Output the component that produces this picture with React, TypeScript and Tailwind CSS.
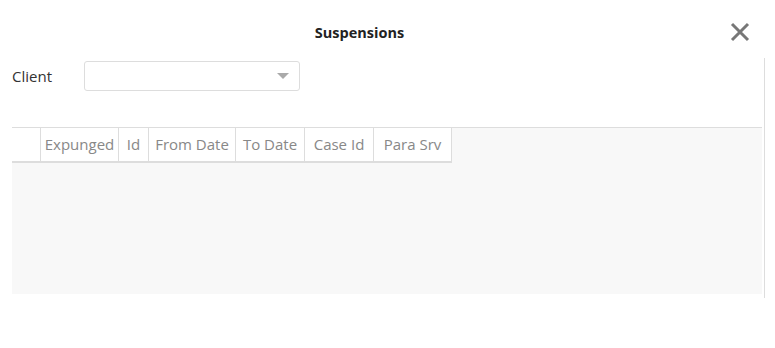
export default function App() {
  const cols = [
    { label: "Expunged", w: "w-[78px]" },
    { label: "Id", w: "w-[30px]" },
    { label: "From Date", w: "w-[87px]" },
    { label: "To Date", w: "w-[69px]" },
    { label: "Case Id", w: "w-[69px]" },
    { label: "Para Srv", w: "w-[78px]" },
  ];
  return (
    <div className="w-[775px] h-[348px] bg-white font-['Open_Sans',sans-serif] text-[#333]">
      {/* header */}
      <div className="relative h-[55px] flex items-center justify-center pt-[10px] pr-[56px]">
        <h1 className="text-[14.5px] font-bold text-[#222]">Suspensions</h1>
        <button className="absolute right-[24px] top-[21px] w-[22px] h-[22px] flex items-center justify-center">
          <svg width="20" height="20" viewBox="0 0 20 20">
            <path d="M2 2 L18 18 M18 2 L2 18" stroke="#777" strokeWidth="3" />
          </svg>
        </button>
      </div>
      <div className="mr-[10px] border-r border-[#ddd] h-[240px]">
        <div className="flex items-center h-[36px] pl-[12px] mt-[3px]">
          <span className="w-[72px] text-[15px] text-[#333]">Client</span>
          <div className="w-[216px] h-[30px] border border-[#ddd] rounded-[3px] flex items-center justify-end pr-[10px]">
            <svg width="12" height="7" viewBox="0 0 12 7">
              <path d="M0 0 L12 0 L6 6 Z" fill="#aaa" />
            </svg>
          </div>
        </div>
        <div className="ml-[12px] mr-[2px] mt-[33px] border-t border-[#ddd] bg-[#f8f8f8] h-[167px]">
          <div className="flex h-[35px] border-b-2 border-[#ddd] w-fit bg-white">
            <div className="w-[29px] border-r border-[#ddd]" />
            {cols.map((c) => (
              <div
                key={c.label}
                className={`${c.w} border-r border-[#ddd] flex items-center justify-center text-[15px] text-[#888]`}
              >
                {c.label}
              </div>
            ))}
          </div>
        </div>
      </div>
    </div>
  );
}
